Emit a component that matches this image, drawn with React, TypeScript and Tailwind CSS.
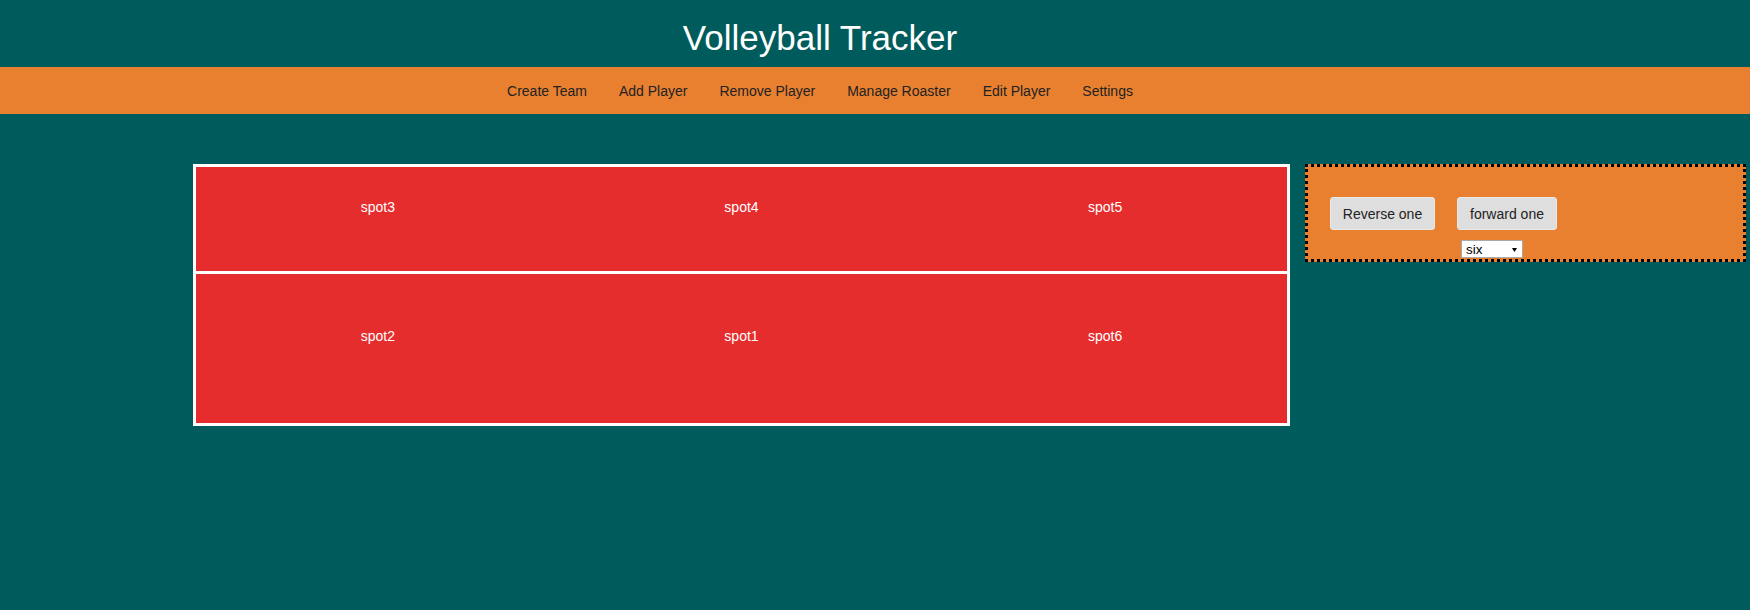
export default function App() {
  const navItems = ["Create Team", "Add Player", "Remove Player", "Manage Roaster", "Edit Player", "Settings"];
  return (
    <div className="min-h-[610px] bg-[#005c5c] font-['Liberation_Sans',Arial,sans-serif]">
      <header className="h-[67px] flex justify-center pr-[110px] pt-[18px]">
        <h1 className="text-[35px] leading-[39px] text-white">Volleyball Tracker</h1>
      </header>
      <nav className="h-[47px] bg-[#e8802f] flex items-center justify-center pr-[110px] gap-[32px] text-[14px] leading-[16px] text-[#222]">
        {navItems.map((n) => (
          <span key={n}>{n}</span>
        ))}
      </nav>
      <main className="flex items-start pl-[193px] pt-[50px] gap-[15px]">
        <div className="w-[1097px] border-[3px] border-white bg-[#e62d2e] text-white text-[14px] leading-[16px]">
          <div className="grid grid-cols-3 h-[104px] pt-[32px] text-center">
            <span>spot3</span>
            <span>spot4</span>
            <span>spot5</span>
          </div>
          <div className="grid grid-cols-3 h-[152px] pt-[54px] border-t-[3px] border-white text-center">
            <span>spot2</span>
            <span>spot1</span>
            <span>spot6</span>
          </div>
        </div>
        <div className="w-[441px] h-[98px] border-[3px] border-dotted border-black bg-[#e8802f] flex flex-col">
          <div className="flex gap-[22px] pl-[22px] pt-[30px]">
            <button className="h-[33px] w-[105px] rounded-[3px] bg-[#dedede] border border-[#e9e9e9] text-[14px] leading-[16px] text-[#222]">
              Reverse one
            </button>
            <button className="h-[33px] w-[100px] rounded-[3px] bg-[#dedede] border border-[#e9e9e9] text-[14px] leading-[16px] text-[#222]">
              forward one
            </button>
          </div>
          <div className="relative ml-[153px] mt-[10px] w-[62px] h-[18px]">
            <select
              defaultValue="six"
              className="block appearance-none w-[62px] h-[18px] bg-white border border-[#a9a9a9] pl-[4px] pt-[1px] text-[13.33px] leading-[15px] text-black outline-none"
            >
              <option value="six">six</option>
            </select>
            <svg
              className="pointer-events-none absolute right-[6px] top-[8px]"
              width="5"
              height="4"
              viewBox="0 0 5 4"
            >
              <path d="M0 0H5L2.5 4Z" fill="#000" />
            </svg>
          </div>
        </div>
      </main>
    </div>
  );
}
